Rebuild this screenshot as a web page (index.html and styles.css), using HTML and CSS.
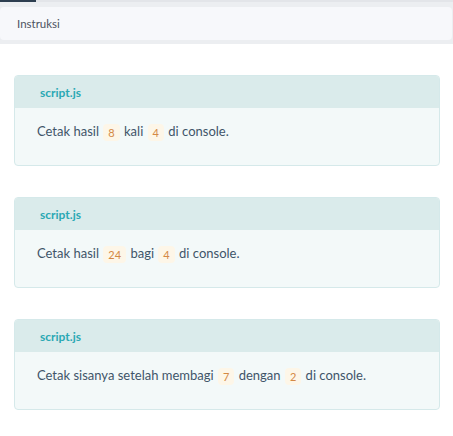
FILE: index.html
```html
<!DOCTYPE html>
<html>
<head>
<meta charset="utf-8">
<link rel="stylesheet" href="styles.css">
</head>
<body>
<div class="tabs"><span class="tab-active"></span></div>
<div class="instr-wrap">
  <div class="instr">Instruksi</div>
</div>
<main class="list">
  <section class="card">
    <div class="card-head">script.js</div>
    <div class="card-body">Cetak hasil <span class="num">8</span> kali <span class="num">4</span> di console.</div>
  </section>
  <section class="card">
    <div class="card-head">script.js</div>
    <div class="card-body">Cetak hasil <span class="num">24</span> bagi <span class="num">4</span> di console.</div>
  </section>
  <section class="card">
    <div class="card-head">script.js</div>
    <div class="card-body">Cetak sisanya setelah membagi <span class="num">7</span> dengan <span class="num">2</span> di console.</div>
  </section>
</main>
</body>
</html>
```
FILE: styles.css
```css
html, body {
  margin: 0;
  padding: 0;
  background: #ffffff;
  font-family: Lato, "Open Sans", sans-serif;
}
.tabs {
  height: 2px;
  background: #e3e5e9;
  display: flex;
}
.tab-active {
  width: 36px;
  height: 2px;
  background: #2d3e50;
}
.instr-wrap {
  background: #eceef1;
  padding: 5px 1px 4px 0;
}
.instr {
  background: #f7f8fb;
  border-radius: 4px;
  height: 33px;
  line-height: 33px;
  padding-left: 17px;
  font-size: 11.5px;
  color: #4b5361;
}
.list {
  padding: 31px 13px 0 14px;
  display: flex;
  flex-direction: column;
  gap: 31px;
}
.card {
  border: 1px solid #d5e9ea;
  border-radius: 4px;
  overflow: hidden;
  background: #f3f9f9;
}
.card-head {
  background: #daebeb;
  height: 32px;
  line-height: 34px;
  padding-left: 25px;
  font-size: 12px;
  font-weight: 700;
  color: #2aa8b4;
}
.card-body {
  padding: 13px 22px 24px;
  font-size: 13px;
  line-height: 20px;
  color: #3f5569;
}
.num {
  display: inline-block;
  background: #fdf6e8;
  color: #d48945;
  font-size: 11px;
  line-height: 17px;
  padding: 0 5px;
  border-radius: 4px;
  margin: 0 1px;
  vertical-align: -1px;
}
```
